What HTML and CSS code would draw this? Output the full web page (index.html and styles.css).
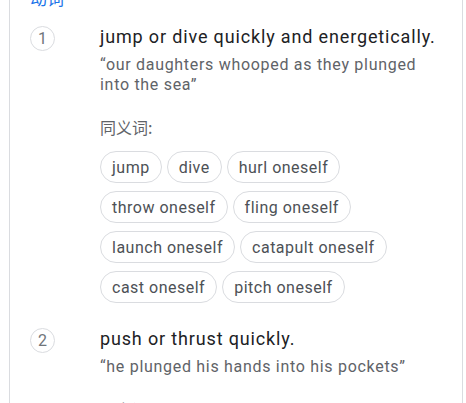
FILE: index.html
```html
<!DOCTYPE html>
<html lang="zh">
<head>
<meta charset="utf-8">
<link rel="stylesheet" href="styles.css">
</head>
<body>
<div class="panel">
  <div class="pos">动词</div>
  <ol class="senses">
    <li class="sense">
      <span class="num">1</span>
      <div class="body">
        <div class="def">jump or dive quickly and energetically.</div>
        <div class="ex">“our daughters whooped as they plunged into the sea”</div>
        <div class="syn-label">同义词:</div>
        <div class="chips">
          <span class="chip">jump</span>
          <span class="chip">dive</span>
          <span class="chip">hurl oneself</span>
          <span class="chip">throw oneself</span>
          <span class="chip">fling oneself</span>
          <span class="chip">launch oneself</span>
          <span class="chip">catapult oneself</span>
          <span class="chip">cast oneself</span>
          <span class="chip">pitch oneself</span>
        </div>
      </div>
    </li>
    <li class="sense">
      <span class="num">2</span>
      <div class="body">
        <div class="def">push or thrust quickly.</div>
        <div class="ex">“he plunged his hands into his pockets”</div>
        <div class="syn-label">同义词:</div>
      </div>
    </li>
  </ol>
</div>
</body>
</html>
```
FILE: styles.css
```css
html, body {
  margin: 0;
  padding: 0;
  background: #fff;
  overflow: hidden;
}
body {
  font-family: Roboto, "Noto Sans CJK SC", sans-serif;
  height: 403px;
}
.panel {
  margin-left: 9px;
  width: 454px;
  height: 440px;
  border-left: 1px solid #dadce0;
  border-right: 1px solid #dadce0;
  padding: 0 20px;
  box-sizing: border-box;
}
.pos {
  margin-top: -12px;
  font-size: 17px;
  line-height: 20px;
  color: #1a73e8;
  font-family: "Noto Sans CJK SC", sans-serif;
}
.senses {
  list-style: none;
  margin: 0;
  padding: 0;
}
.sense {
  display: flex;
  align-items: flex-start;
  margin-top: 16px;
}
.sense + .sense {
  margin-top: 23px;
}
.num {
  flex: 0 0 auto;
  width: 25px;
  height: 25px;
  box-sizing: border-box;
  border: 1px solid #dadce0;
  border-radius: 50%;
  margin-top: 2px;
  margin-right: 45px;
  display: flex;
  align-items: center;
  justify-content: center;
  font-size: 16px;
  color: #70757a;
}
.body {
  flex: 1 1 auto;
  min-width: 0;
}
.def {
  font-size: 18px;
  line-height: 25px;
  letter-spacing: 0.85px;
  color: #202124;
}
.ex {
  margin-top: 6px;
  font-size: 16px;
  line-height: 20px;
  letter-spacing: 0.7px;
  color: #5f6368;
}
.syn-label {
  margin-top: 22px;
  font-size: 16px;
  line-height: 20px;
  color: #5f6368;
  font-family: "Noto Sans CJK SC", sans-serif;
}
.chips {
  display: flex;
  flex-wrap: wrap;
  gap: 8px 5px;
  margin-top: 14px;
}
.chip {
  height: 32px;
  box-sizing: border-box;
  border: 1px solid #dadce0;
  border-radius: 16px;
  padding: 0 11px;
  display: flex;
  align-items: center;
  font-size: 16px;
  letter-spacing: 0.5px;
  color: #4d5156;
}
```
